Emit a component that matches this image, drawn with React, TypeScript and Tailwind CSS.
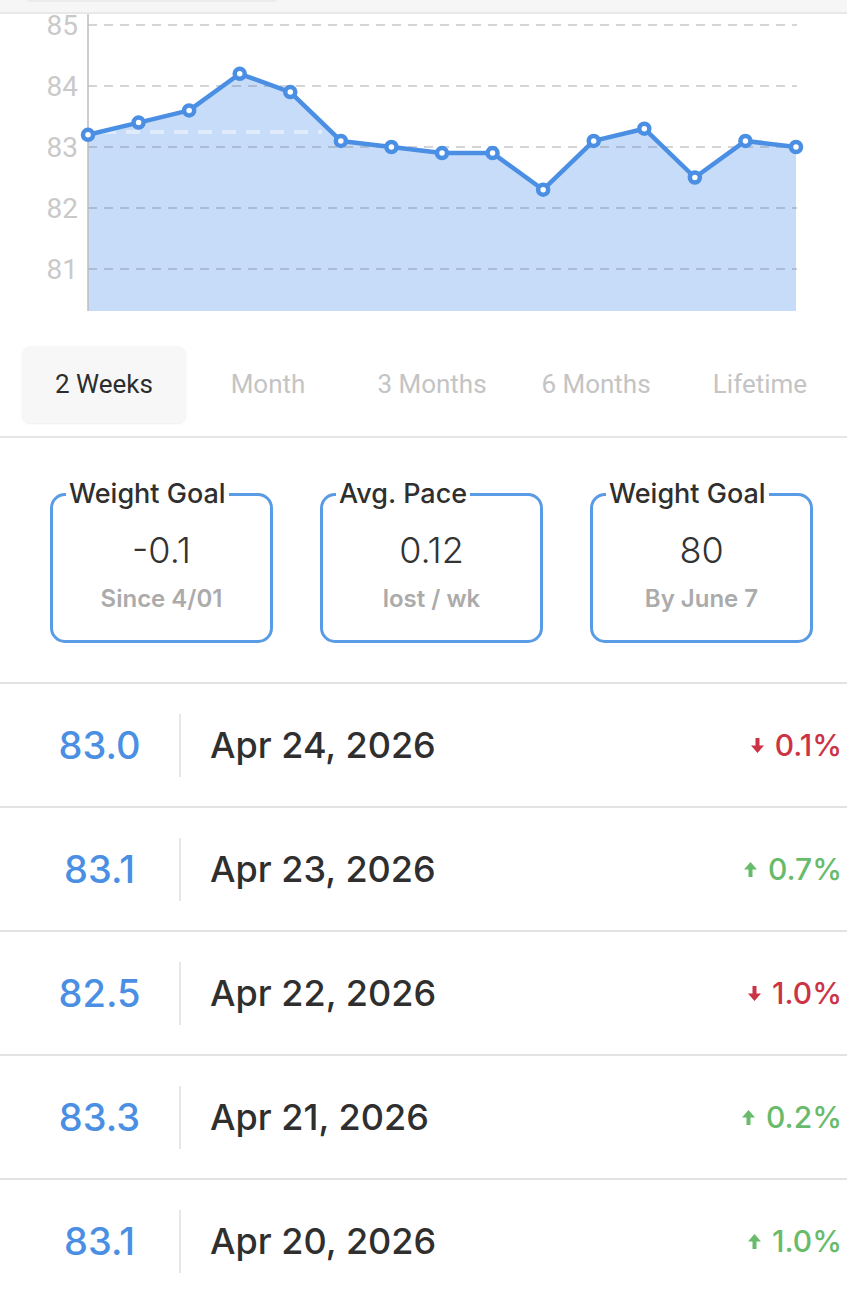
const points = [83.2, 83.4, 83.6, 84.2, 83.9, 83.1, 83.0, 82.9, 82.9, 82.3, 83.1, 83.3, 82.5, 83.1, 83.0];

const tabs = ['2 Weeks', 'Month', '3 Months', '6 Months', 'Lifetime'];

const stats = [
  { label: 'Weight Goal', value: '-0.1', sub: 'Since 4/01' },
  { label: 'Avg. Pace', value: '0.12', sub: 'lost / wk' },
  { label: 'Weight Goal', value: '80', sub: 'By June 7' },
];

const entries = [
  { weight: '83.0', date: 'Apr 24, 2026', change: '0.1%', up: false },
  { weight: '83.1', date: 'Apr 23, 2026', change: '0.7%', up: true },
  { weight: '82.5', date: 'Apr 22, 2026', change: '1.0%', up: false },
  { weight: '83.3', date: 'Apr 21, 2026', change: '0.2%', up: true },
  { weight: '83.1', date: 'Apr 20, 2026', change: '1.0%', up: true },
];

// chart geometry (svg coords, page y - 14)
const X0 = 88;
const STEP = 708 / 14;
const yFor = (v: number) => 133 - (v - 83) * 61;
const BOTTOM = 297;

const Chart = () => {
  const coords = points.map((v, i) => [X0 + i * STEP, yFor(v)]);
  const line = coords.map(([x, y]) => `${x},${y}`).join(' ');
  const area = `${X0},${BOTTOM} ${line} ${X0 + 14 * STEP},${BOTTOM}`;

  return (
    <svg width="847" height="316" viewBox="0 0 847 316" className="block">
      <polygon points={area} fill="#c6dcf8" />
      {[85, 84, 83, 82, 81].map((v) => (
        <g key={v}>
          <line
            x1={X0}
            x2={797}
            y1={yFor(v)}
            y2={yFor(v)}
            stroke="rgba(110,110,120,0.38)"
            strokeWidth="1.5"
            strokeDasharray="9 7"
          />
          <text
            x="78"
            y={yFor(v) + 10}
            textAnchor="end"
            fontSize="28"
            fill="#c9c9c9"
            style={{ fontFamily: 'Roboto, sans-serif' }}
          >
            {v}
          </text>
        </g>
      ))}
      <line x1="102" x2="322" y1="118" y2="118" stroke="rgba(255,255,255,0.45)" strokeWidth="4" strokeDasharray="14 10" />
      <line x1={X0} x2={X0} y1="0" y2={BOTTOM} stroke="#bdbdbd" strokeWidth="1.5" />
      <polyline points={line} fill="none" stroke="#4a8fe3" strokeWidth="4.5" strokeLinejoin="round" />
      {coords.map(([x, y], i) => (
        <circle key={i} cx={x} cy={y} r="5" fill="#fff" stroke="#4a8fe3" strokeWidth="4.5" />
      ))}
    </svg>
  );
};

const Arrow = ({ up }: { up: boolean }) => (
  <svg width="13" height="15" viewBox="0 0 13 15" className={up ? '' : 'rotate-180'}>
    <path d="M6.5 0 L13 7.5 L8.5 7.5 L8.5 15 L4.5 15 L4.5 7.5 L0 7.5 Z" fill="currentColor" />
  </svg>
);

export default function App() {
  return (
    <div className="w-[847px] min-h-[1296px] bg-white overflow-hidden" style={{ fontFamily: "Inter, 'Open Sans', sans-serif" }}>
      {/* top strip */}
      <div className="h-[14px] bg-[#f6f6f6] border-b-2 border-[#e8e8e8] px-[27px]">
        <div className="w-[250px] h-[2px] bg-[#ececec] rounded-b" />
      </div>

      <Chart />

      {/* range tabs */}
      <div className="flex pl-[22px] pt-[16px] pb-[13px] border-b-2 border-[#e6e6e6]" style={{ fontFamily: 'Roboto, sans-serif' }}>
        {tabs.map((t, i) => (
          <div
            key={t}
            className={`w-[164px] h-[77px] flex items-center justify-center text-[26px] rounded-[8px] ${
              i === 0 ? 'bg-[#f7f7f7] text-[#2d2d2d] shadow-[0_1px_2px_rgba(0,0,0,0.07)]' : 'text-[#c4c4c4]'
            }`}
          >
            {t}
          </div>
        ))}
      </div>

      {/* stat cards */}
      <div className="flex gap-[47px] pl-[50px] pt-[55px] pb-[39px] border-b-2 border-[#e3e3e3]">
        {stats.map((s, i) => (
          <div key={i} className="relative w-[223px] h-[150px] border-[3px] border-[#5a9be6] rounded-[15px] flex flex-col items-center pt-[32px]">
            <span className="absolute -top-[19px] left-[13px] bg-white px-[3px] text-[27px] leading-[34px] text-[#2f2f2f] font-medium">
              {s.label}
            </span>
            <span className="text-[36px] leading-[44px] text-[#333] font-light">{s.value}</span>
            <span className="mt-[12px] text-[24px] leading-[30px] text-[#ababab] font-semibold">{s.sub}</span>
          </div>
        ))}
      </div>

      {/* entries */}
      {entries.map((e, i) => (
        <div key={i} className="flex items-center h-[124px] border-b-2 border-[#e3e3e3]">
          <div className="w-[179px] pl-[20px] text-center text-[38px] font-medium text-[#4a8fe3]">{e.weight}</div>
          <div className="w-[2px] h-[63px] bg-[#e6e6e6]" />
          <div className="pl-[29px] flex-1 text-[36px] font-medium text-[#2f2f2f]">{e.date}</div>
          <div className={`flex items-center gap-[11px] pr-[5px] text-[30px] font-medium ${e.up ? 'text-[#67bb6a]' : 'text-[#cc3345]'}`}>
            <Arrow up={e.up} />
            <span>{e.change}</span>
          </div>
        </div>
      ))}
    </div>
  );
}
